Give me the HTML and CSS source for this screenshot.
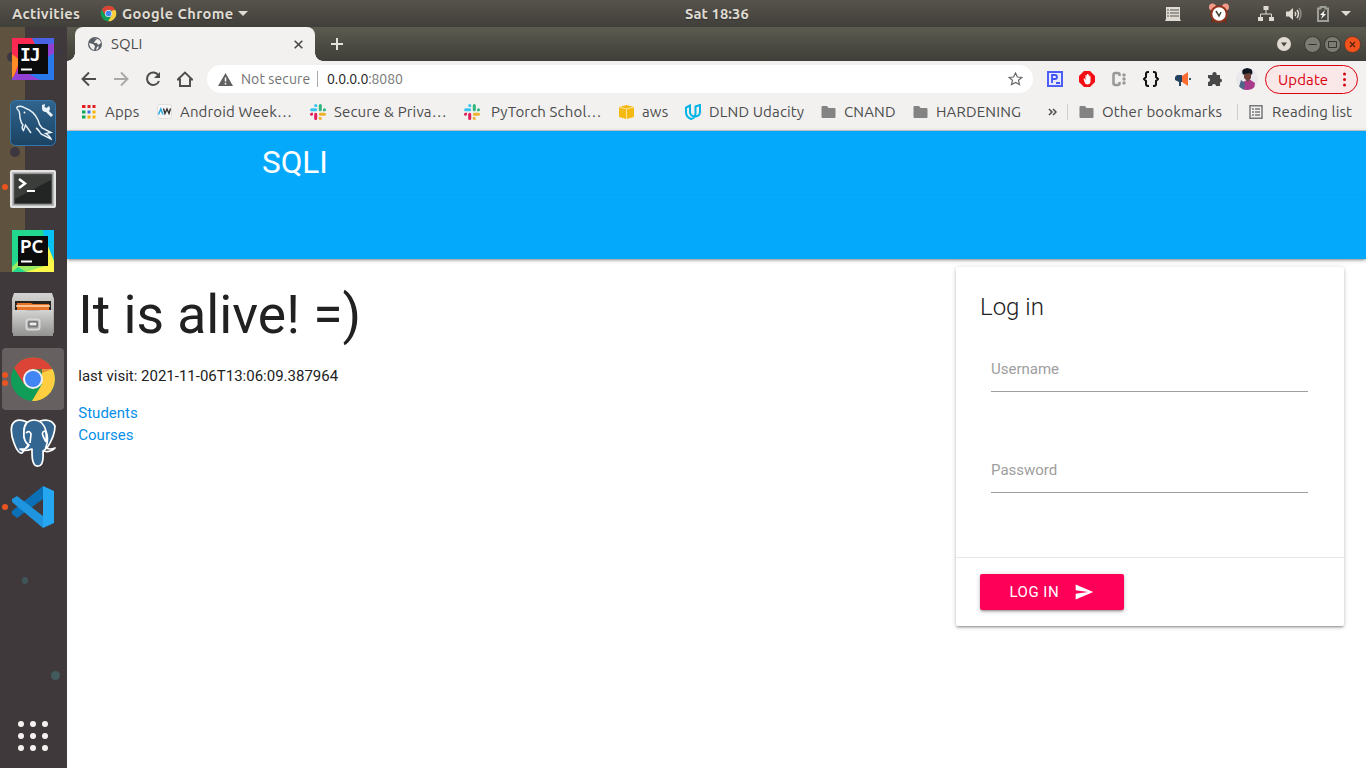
FILE: index.html
```html
<!DOCTYPE html>
<html lang="en">
<head>
<meta charset="utf-8">
<title>SQLI</title>
<link rel="stylesheet" href="styles.css">
</head>
<body>
<svg class="defs" width="0" height="0">
  <symbol id="chrome" viewBox="0 0 48 48">
    <circle cx="24" cy="24" r="22" fill="#0f9d58"/>
    <path d="M5 13A22 22 0 0 1 43.500 14H24L15 29Z" fill="#db4437"/>
    <path d="M43.500 14A22 22 0 0 1 23 46L33 29V14Z" fill="#ffcd40"/>
    <path d="M24 14h19.500l-10.500 4Z" fill="#c43b2f" opacity=".4"/>
    <circle cx="24" cy="24" r="10" fill="#f1f1f1"/><circle cx="24" cy="24" r="8" fill="#4285f4"/>
  </symbol>
  <symbol id="slack" viewBox="0 0 16 16">
    <path d="M5.700 0a1.500 1.500 0 0 1 1.500 1.500V3H5.700a1.500 1.500 0 0 1 0-3zM1.600 4.200H5.700a1.500 1.500 0 0 1 0 3H1.600a1.500 1.500 0 0 1 0-3z" fill="#36c5f0"/>
    <path d="M10.300 0a1.500 1.500 0 0 1 1.500 1.500V5.700a1.500 1.500 0 0 1-3 0V1.500A1.500 1.500 0 0 1 10.300 0zM14.500 4.200a1.500 1.500 0 0 1 0 3H13V5.700a1.500 1.500 0 0 1 1.500-1.500z" fill="#2eb67d"/>
    <path d="M10.300 8.800h4.200a1.500 1.500 0 0 1 0 3h-4.200a1.500 1.500 0 0 1 0-3zM8.800 13h1.500a1.500 1.500 0 1 1-1.500 1.500z" fill="#ecb22e"/>
    <path d="M5.700 8.800a1.500 1.500 0 0 1 1.500 1.500v4.200a1.500 1.500 0 0 1-3 0v-4.200a1.500 1.500 0 0 1 1.500-1.500zM1.500 8.800H3v1.500a1.500 1.500 0 1 1-1.500-1.500z" fill="#e01e5a"/>
  </symbol>
  <symbol id="folder" viewBox="0 0 14 12"><path d="M1 0H5.500L7 2H13Q14 2 14 3V11Q14 12 13 12H1Q0 12 0 11V1Q0 0 1 0Z" fill="#838383"/></symbol>
</svg>
<header class="topbar">
  <span class="activities">Activities</span>
  <span class="app-menu"><svg width="17" height="17"><use href="#chrome"/></svg><b>Google Chrome</b><i class="caret"></i></span>
  <span class="clock">Sat 18:36</span>
  <span class="indicators">
    <svg width="16" height="14" viewBox="0 0 16 14"><path d="M1 0H15V12L16 14H0L1 12Z" fill="#dfdbd2"/><path d="M2 3h2M5 3h9M2 6h2M5 6h9M2 9h2M5 9h9" stroke="#57554f" stroke-width="1.200"/></svg>
    <svg class="alarm" width="22" height="20" viewBox="0 0 22 20"><path d="M5 17l-1 2.500M17 17l1 2.500" stroke="#7b2815" stroke-width="2"/><circle cx="4.500" cy="4" r="3.500" fill="#f59a8b"/><circle cx="17.500" cy="4" r="3.500" fill="#f59a8b"/><circle cx="11" cy="11" r="7.700" fill="#fff" stroke="#8e321a" stroke-width="2"/><path d="M8 8l3 5 2-4" fill="none" stroke="#443" stroke-width="1.500"/></svg>
    <svg class="net" width="16" height="15" viewBox="0 0 16 15"><path d="M5.500 0h5v4h-5zM0 11h5v4H0zM11 11h5v4h-5z" fill="#dfdbd2"/><path d="M8 4v4M2.500 11V8H13.500v3" fill="none" stroke="#dfdbd2"/></svg>
    <svg class="vol" width="16" height="14" viewBox="0 0 16 14"><path d="M0 4.500h3L7 1v12L3 9.500H0z" fill="#dfdbd2"/><path d="M9 5q1.500 2 0 4M11 3q3 4 0 8" fill="none" stroke="#dfdbd2" stroke-width="1.500"/><path d="M13 1q4 6 0 12" fill="none" stroke="#8c8a84" stroke-width="1.500"/></svg>
    <svg class="bat" width="12" height="16" viewBox="0 0 12 16"><path d="M1 2.500h2.500V1h5v1.500H11V15H1z" fill="none" stroke="#9f9d97" stroke-width="2"/><path d="M8 4L3 9h2.500L4 13l5-5H6.500z" fill="#fff"/></svg>
    <i class="caret"></i>
  </span>
</header>
<div class="desktop">
<nav class="dock">
  <i class="wall w1"></i><i class="wall w2"></i><i class="wall w3"></i><i class="wall w4"></i><i class="wall w5"></i>
  <div class="app"><svg width="42" height="42" viewBox="0 0 42 42"><path fill="#2979ea" d="M0 0h42v42H0z"/><path fill="#fc2952" d="M0 0h20l10 20L0 40z"/><path fill="#4a63e4" d="M20 0H42L39 13 28 8z"/><path fill="#fc8c25" d="M0 16l8 6-6 16-2 2z"/><path fill="#9140d3" d="M0 42l6-12 22 12zM33 8l9-3v10l-6 4z"/><path d="M6 6h30v30H6z" fill="#0b0b0c"/><path d="M9 31.500h11" stroke="#fff" stroke-width="2"/><text x="8" y="22.500" class="glyph mono">IJ</text></svg></div>
  <div class="app"><svg width="46" height="46" viewBox="0 0 46 46"><defs><linearGradient id="sea" x2="0" y2="1"><stop stop-color="#30658f"/><stop offset="1" stop-color="#1b4262"/></linearGradient></defs><rect x=".5" y=".5" width="45" height="45" rx="5" fill="url(#sea)" stroke="#3578ad"/><path d="M7 7Q11 5 15 8Q24 11 28 20Q29 25 32 28L41 32.500 35.500 33.500Q40 36 41 39L31 34Q28 29 26 28M7 7Q6 8 9 11Q10 14 10 18Q11 23 13 25Q11 28 13.500 30.500L15.500 25 21 33" fill="none" stroke="#e8f2f8" stroke-width="1.400"/><circle cx="14.500" cy="12.500" r=".9" fill="#fff"/><path d="M32 5l3-1-.5 3 2 1L39 6q2 3 0 5l4 4-2 2-5-5q-4 0-4-4z" fill="#e8f2f8"/></svg></div>
  <div class="app run term"><svg width="46" height="38" viewBox="0 0 46 38"><rect x="1" y="1" width="44" height="36" rx="1" fill="#bbb" stroke="#e3e3e3" stroke-width="2"/><rect x="4" y="4" width="38" height="30" fill="#232524" stroke="#707070"/><path d="M5 5h36v5L5 29z" fill="#3b3d3b"/><path d="M9 9l6 4.500L9 18" stroke="#fff" stroke-width="2.500" fill="none"/><path d="M17 21h8" stroke="#fff" stroke-width="2"/></svg></div>
  <div class="app"><svg width="42" height="42" viewBox="0 0 42 42"><path fill="#22d88f" d="M0 0h42v42H0z"/><path fill="#08c2f4" d="M31 0h11v29L32 9z"/><path fill="#fcf84a" d="M27 6l7 5 8 20v11H14L32 16z"/><path fill="#9bea64" d="M0 37l8-8 28 6-22 7-8-5-6 5z"/><path d="M6 6h30v30H6z" fill="#0b0b0c"/><path d="M9 31.500h11" stroke="#fff" stroke-width="2"/><text x="8" y="22.500" class="glyph" textLength="23" lengthAdjust="spacingAndGlyphs">PC</text></svg></div>
  <div class="app"><svg width="44" height="46" viewBox="0 0 44 46"><defs><linearGradient id="met" x2="0" y2="1"><stop stop-color="#d4d4d2"/><stop offset="1" stop-color="#929290"/></linearGradient></defs><path d="M3 1H41L43 7V41H1V7z" fill="url(#met)"/><path d="M4 9h36v9H4z" fill="#29231d"/><path d="M6 11h14l2 1h16v6H6z" fill="#e67225"/><path d="M5 14h34" stroke="#ffe2bd" stroke-width="1.500"/><path d="M2 18H15L16 19H28L29 18H42V44H2z" fill="url(#met)"/><rect x="15.500" y="27.500" width="13" height="10" rx="2" fill="#999" stroke="#d8d8d8" stroke-width="2"/><path d="M18 30h8v4h-8z" fill="#eee" stroke="#555"/></svg></div>
  <div class="app run run2 active"><svg width="48" height="48"><use href="#chrome"/></svg></div>
  <div class="app"><svg width="48" height="50" viewBox="0 0 48 50"><g fill="#336791" stroke="#fff" stroke-width="1.700" stroke-linejoin="round"><path d="M18 4Q7-1 3 7Q1 15 5 25Q9 36 13 35L20 26Q14 23 15 14Q15 7 18 4Z"/><path d="M31 3Q42 0 46 8Q46 18 38 30L32 28z"/><path d="M15 13Q16 2 25 2Q34 2 37 13Q40 21 37 29Q37 32 34 33Q35 48 29 48Q23 49 23 34V31Q15 34 11 31Q18 32 20 27Q14 24 15 13Z"/><path d="M37 30Q41 32 46 30Q41 35 35 33" fill="none"/><path d="M17 15q4-3 5 1l-1 9M37 13q-5 0-3 5l3 6M36 12q2 5 1 12" fill="none"/></g></svg></div>
  <div class="app run"><svg width="42" height="42" viewBox="0 0 42 42"><path d="M31 0v13L5 32 0 28V25z" fill="#0b70b5"/><path d="M0 13l5-3L31 30v12L0 16z" fill="#1f95e0"/><path d="M31 0l11 5v32L31 42z" fill="#25a7f2"/></svg></div>
  <svg class="grid-btn" width="30" height="30" viewBox="0 0 30 30" fill="#f4f2f0"><circle cx="3" cy="3" r="3"/><circle cx="15" cy="3" r="3"/><circle cx="27" cy="3" r="3"/><circle cx="3" cy="15" r="3"/><circle cx="15" cy="15" r="3"/><circle cx="27" cy="15" r="3"/><circle cx="3" cy="27" r="3"/><circle cx="15" cy="27" r="3"/><circle cx="27" cy="27" r="3"/></svg>
</nav>
<section class="browser">
  <div class="tabstrip">
    <div class="tab">
      <svg width="14" height="14" viewBox="0 0 14 14"><circle cx="7" cy="7" r="7" fill="#5b5f67"/><path d="M6 1Q9 1 9 2L7 4 6 6H9L10 8 13 6Q13 4 11 2.500ZM1 6L5 7 7 9 6 13Q2 12 1 6ZM9 10l2-1-1 3-2 1z" fill="#f2f1f0"/></svg>
      <span>SQLI</span>
      <svg class="close" width="9" height="9" viewBox="0 0 9 9"><path d="M.7.7l7.600 7.600M8.300.7L.7 8.300" stroke="#4a4a4a" stroke-width="1.600"/></svg>
    </div>
    <svg class="plus" width="12" height="12" viewBox="0 0 12 12"><path d="M6 0v12M0 6h12" stroke="#e5e3dd" stroke-width="2"/></svg>
    <div class="win">
      <svg width="14" height="14" viewBox="0 0 14 14"><circle cx="7" cy="7" r="7" fill="#dfdbd2"/><path d="M4 5.500h6L7 9.500z" fill="#45443e"/></svg>
      <svg class="first" width="17" height="17" viewBox="0 0 17 17"><circle cx="8.500" cy="8.500" r="8" fill="#7d7c74" stroke="#38372f"/><path d="M4.500 8.500h8" stroke="#34332e"/></svg>
      <svg width="17" height="17" viewBox="0 0 17 17"><circle cx="8.500" cy="8.500" r="8" fill="#7d7c74" stroke="#38372f"/><path d="M4.500 5.500h8v6h-8z" fill="none" stroke="#34332e"/></svg>
      <svg width="17" height="17" viewBox="0 0 17 17"><circle cx="8.500" cy="8.500" r="8" fill="#f3521d" stroke="#4c3027" stroke-width=".6"/><path d="M6 6l5 5M11 6l-5 5" stroke="#502211" stroke-width="1.200"/></svg>
    </div>
  </div>
  <div class="toolbar">
    <svg width="16" height="16" viewBox="0 0 16 16"><path d="M15 8H2M8 1.500L1.500 8 8 14.500" fill="none" stroke="#4c4c4c" stroke-width="1.900"/></svg>
    <svg width="16" height="16" viewBox="0 0 16 16"><path d="M1 8h13M8 1.500L14.500 8 8 14.500" fill="none" stroke="#a9a8a7" stroke-width="1.900"/></svg>
    <svg width="16" height="16" viewBox="0 0 16 16"><path d="M13.500 4.500A6.200 6.200 0 1 0 14 10" fill="none" stroke="#4c4c4c" stroke-width="2"/><path d="M15 1v6H9z" fill="#4c4c4c"/></svg>
    <svg width="16" height="16" viewBox="0 0 16 16"><path d="M.8 8.500L8 1.500 15.200 8.500H13V15H3V8.500Z" fill="none" stroke="#4c4c4c" stroke-width="1.900"/></svg>
    <div class="omnibox">
      <svg width="15" height="13" viewBox="0 0 15 13"><path d="M7.500 0L15 13H0z" fill="#616161"/><path d="M7.500 4.500V8.500M7.500 9.800v1.600" stroke="#fff" stroke-width="1.500"/></svg>
      <span class="insecure">Not secure</span><i></i><span class="url">0.0.0.0<em>:8080</em></span>
      <svg class="star" width="15" height="14" viewBox="0 0 15 14"><path d="M7.500 1l1.900 4 4.400.4-3.300 2.900 1 4.300-4-2.200-4 2.200 1-4.300L1.200 5.400 5.600 5z" fill="none" stroke="#666" stroke-width="1.200"/></svg>
    </div>
    <div class="exts">
      <svg width="16" height="16" viewBox="0 0 16 16"><path d="M1 1h14v14H1z" fill="#e8e9fc" stroke="#4d5ef6" stroke-width="2"/><path d="M5 12V4h3q2 0 2 2T8 8H5M9 12h4" fill="none" stroke="#4053f5" stroke-width="1.800"/></svg>
      <svg width="16" height="16" viewBox="0 0 16 16"><path d="M5 0h6l5 5v6l-5 5H5l-5-5V5z" fill="#f40d12"/><path d="M4.500 7.500h1l1 1.500V4h1v3l.5-4h1l.2 4V3.500h1V7l.3-2h1v6q-.5 2.500-3 2.500T5.500 11Z" fill="#fff"/></svg>
      <svg width="16" height="16" viewBox="0 0 16 16"><path d="M8.500 5V3.500Q8.500 2 6.500 2H4.500Q2.500 2 2.500 4V12Q2.500 14 4.500 14H6.500Q8.500 14 8.500 12.500V11" fill="none" stroke="#999" stroke-width="2.600"/><g fill="#999"><circle cx="13" cy="4" r="1.700"/><circle cx="13" cy="8" r="1.700"/><circle cx="13" cy="12" r="1.700"/></g></svg>
      <svg width="16" height="16" viewBox="0 0 16 16"><path d="M6 1H5Q3 1 3 3V6L1 8l2 2v3q0 2 2 2h1M10 1h1q2 0 2 2v3l2 2-2 2v3q0 2-2 2h-1" fill="none" stroke="#111" stroke-width="2"/></svg>
      <svg width="16" height="16" viewBox="0 0 16 16"><path d="M2 4h5v7H6v4H4v-4L0 9V6z" fill="#24415d"/><path d="M7 5l6-4v14l-6-4z" fill="#ff6c32"/><path d="M14 7h2v2h-2z" fill="#35526b"/></svg>
      <svg width="16" height="16" viewBox="0 0 16 16"><path d="M1 4h4.500A2.200 2.200 0 1 1 9.500 4H13v3.500a2 2 0 1 1 0 4V15H9a2 2 0 1 0-4 0H1V11a2 2 0 1 0 0-4z" fill="#484848"/></svg>
      <svg class="avatar" width="22" height="22" viewBox="0 0 22 22"><defs><clipPath id="round"><circle cx="11" cy="11" r="11"/></clipPath></defs><g clip-path="url(#round)"><path d="M0 0h22v22H0z" fill="#e9e9ec"/><path d="M6 22l1-8 6-3 6 4-1 7z" fill="#a83c8a"/><path d="M8 5q3-3 7 0v5l-3 4-4-4z" fill="#714338"/><path d="M7 7Q4 1 11 0q7 0 5 7l-2-2-6 1z" fill="#101722"/><path d="M3 19l2-7 4 3-1 7z" fill="#4e6687"/></g></svg>
    </div>
    <button class="update">Update<svg width="3" height="15" viewBox="0 0 3 15" fill="#d9000d"><circle cx="1.500" cy="2" r="1.500"/><circle cx="1.500" cy="7.500" r="1.500"/><circle cx="1.500" cy="13" r="1.500"/></svg></button>
  </div>
  <div class="bookmarks">
    <span><svg width="15" height="14" viewBox="0 0 15 14"><path d="M0 0h3.500v3H0zM5.500 0h3v3h-3zM10.500 0h3v3h-3z" fill="#e61f1f"/><path d="M0 5.500h3.500v3H0zM0 10.500h3.500v3H0z" fill="#0fa958"/><path d="M5.500 5.500h3v3h-3z" fill="#3b73e8"/><path d="M10.500 5.500h3v3h-3zM5.500 10.500h3v3h-3zM10.500 10.500h3v3h-3z" fill="#f5b400"/></svg><a>Apps</a></span>
    <span><svg width="15" height="15" viewBox="0 0 15 15"><rect x=".5" y=".5" width="14" height="14" rx="1.500" fill="#f7f7f7" stroke="#e0e0e0"/><path d="M1.500 10.500L3.800 5 6 10.500" fill="none" stroke="#27a9df" stroke-width="1.500"/><path d="M6.500 4.500l1.500 5 2-4.500 2 4.500 1.500-5" fill="none" stroke="#333" stroke-width="1.400"/></svg><a>Android Week…</a></span>
    <span><svg width="16" height="16"><use href="#slack"/></svg><a>Secure &amp; Priva…</a></span>
    <span class="g11"><svg width="16" height="16"><use href="#slack"/></svg><a>PyTorch Schol…</a></span>
    <span><svg width="15" height="14" viewBox="0 0 15 14"><path d="M0 2l7.500-2L15 2v10l-7.500 2L0 12z" fill="#f5b914"/><path d="M0 2l7.500 2L15 2M7.500 4v10" fill="none" stroke="#fbe39d"/></svg><a>aws</a></span>
    <span><svg width="16" height="16" viewBox="0 0 16 16"><path d="M5 1.500L1 3.500V8Q1 13 6 15Q10.500 14 10.500 9V2.500L15 1V8Q15 12 10 12.500Q5 12 5 8Z" fill="none" stroke="#02b3e4" stroke-width="2"/></svg><a>DLND Udacity</a></span>
    <span><svg width="15" height="12"><use href="#folder"/></svg><a>CNAND</a></span>
    <span><svg width="15" height="12"><use href="#folder"/></svg><a>HARDENING</a></span>
    <svg width="9" height="8" viewBox="0 0 9 8"><path d="M1 1l3 3-3 3M5 1l3 3-3 3" fill="none" stroke="#4c4c4c" stroke-width="1.500"/></svg>
    <i class="sep"></i>
    <span><svg width="15" height="12"><use href="#folder"/></svg><a>Other bookmarks</a></span>
    <i class="sep"></i>
    <span><svg width="15" height="14" viewBox="0 0 15 14"><path d="M1 .8h12v12.400H1z" fill="none" stroke="#777" stroke-width="1.500"/><path d="M3 4h2M6 4h5M3 7h2M6 7h5M3 10h2M6 10h5" stroke="#777" stroke-width="1.400"/></svg><a>Reading list</a></span>
  </div>
  <main class="page">
    <nav class="nav"><div class="brand">SQLI</div></nav>
    <div class="content">
      <div class="intro">
        <h2>It is alive! =)</h2>
        <p>last visit: 2021-11-06T13:06:09.387964</p>
        <a>Students</a><a>Courses</a>
      </div>
      <form class="card">
        <div class="card-content">
          <span class="card-title">Log in</span>
          <label class="field">Username</label>
          <label class="field">Password</label>
        </div>
        <div class="card-action"><button type="button" class="btn">LOG IN<svg width="20" height="20" viewBox="0 0 24 24"><path d="M2 21l21-9L2 3v7l15 2-15 2z" fill="#fff"/></svg></button></div>
      </form>
    </div>
  </main>
</section>
</div>
</body>
</html>
```
FILE: styles.css
```css
* { box-sizing: border-box; }
body { margin: 0; width: 1366px; height: 768px; overflow: hidden; display: flex; flex-direction: column; font-family: Ubuntu, "Noto Sans", sans-serif; font-size: 15px; color: #4c4c4c; }
svg { display: block; flex: none; }
.defs { position: absolute; }
.caret { border: 5px solid transparent; border-top-color: #dfdbd2; border-bottom: 0; }
.glyph { fill: #fff; font: 700 18px Ubuntu, "Noto Sans", sans-serif; }
.mono { font: 700 18px "DejaVu Sans Mono", monospace; letter-spacing: -1px; }

.topbar { height: 27px; flex: none; display: grid; grid-template-columns: 88px 585px 1fr auto; align-items: center; padding: 0 15px 0 12px; background: linear-gradient(#57534c, #413f3a); color: #dfdbd2; font-weight: 600; font-size: 14.67px; letter-spacing: .3px; text-shadow: 0 1px 1px #2228; }
.activities, .clock, .app-menu b { padding-bottom: 1px; }
.clock { letter-spacing: .1px; }
.app-menu { display: flex; align-items: center; gap: 5px; }
.app-menu b { font-weight: 600; letter-spacing: .38px; }
.indicators { display: flex; align-items: center; }
.alarm { margin-left: 27px; margin-top: -2px; }
.net { margin-left: 28px; }
.vol { margin-left: 12px; }
.bat { margin-left: 15px; }
.indicators .caret { margin-left: 12px; }

.desktop { flex: 1; display: flex; min-height: 0; }
.dock { position: relative; width: 67px; flex: none; background: linear-gradient(90deg, #5f523e 25px, #40393b 25px) 0 0 / 100% 245px no-repeat #40393b; padding-top: 1px; display: flex; flex-direction: column; }
.app { position: relative; width: 62px; height: 62px; margin: 0 0 2px 2px; display: grid; place-items: center; border-radius: 4px; }
.term { padding-top: 3px; }
.active { background: #676061; }
.run::before { content: ""; position: absolute; left: 0; top: 28px; width: 6px; height: 6px; border-radius: 50%; background: #e95420; }
.run2::before { top: 24px; box-shadow: 0 8px #e95420; }
.grid-btn { margin: auto 0 17px 18px; }
.wall { position: absolute; border-radius: 50%; background: #3c3740; }
.w1 { left: 7px; top: 25px; width: 10px; height: 10px; }
.w2 { left: 10px; top: 120px; width: 10px; height: 10px; }
.w3 { left: 56px; top: 22px; width: 7px; height: 7px; }
.w4 { left: 22px; top: 550px; width: 6px; height: 7px; background: #405558; }
.w5 { left: 51px; top: 644px; width: 9px; height: 9px; background: #425b5e; }

.browser { flex: 1; min-width: 0; display: flex; flex-direction: column; background: #f2f1f0; }
.tabstrip { height: 34px; display: flex; align-items: center; background: linear-gradient(#5b5b50, #3f3e38); padding: 0 5px 0 8px; }
.tab { position: relative; width: 240px; height: 34px; border-radius: 8px 8px 0 0; background: #f2f1f0; display: flex; align-items: center; padding: 0 12px 0 13px; font-size: 15px; }
.tab span { margin-left: 9px; padding-bottom: 2px; letter-spacing: .1px; }
.tab::before, .tab::after { content: ""; position: absolute; bottom: 0; width: 8px; height: 8px; }
.tab::before { left: -8px; background: radial-gradient(circle at 0 0, transparent 7.5px, #f2f1f0 8px); }
.tab::after { right: -8px; background: radial-gradient(circle at 100% 0, transparent 7.5px, #f2f1f0 8px); }
.close { margin-left: auto; }
.plus { margin-left: 16px; }
.win { margin-left: auto; display: flex; align-items: center; gap: 3px; }
.win .first { margin-left: 10px; }

.toolbar { height: 36px; display: flex; align-items: center; gap: 16px; padding: 0 8px 0 14px; }
.omnibox { width: 826px; height: 28px; margin-left: -2px; background: #fff; border-radius: 14px; display: flex; align-items: center; padding: 0 10px 0 11px; font-size: 14px; }
.insecure { margin-left: 8px; width: 76px; color: #727272; white-space: nowrap; letter-spacing: .1px; }
.omnibox i { width: 1px; height: 16px; background: #aaa; margin-right: 9px; }
.url { color: #222; letter-spacing: -.1px; }
.url em { font-style: normal; color: #777; }
.star { margin-left: auto; }
.exts { display: flex; gap: 16px; margin-left: -2px; align-items: center; }
.avatar { margin: 0 -3px; }
.update { width: 93px; height: 29px; margin-left: -6px; border: 1px solid #d9000d; border-radius: 15px; background: #fae8e9; color: #d9000d; font: 15px Ubuntu, "Noto Sans", sans-serif; letter-spacing: .1px; padding: 0 11px 0 12px; display: flex; align-items: center; justify-content: space-between; }

.bookmarks { height: 34px; display: grid; grid-template-columns: 75px 153px 154px 155px 66px 136px 92px 135px 19px 12px 158px 12px 1fr; align-items: center; padding: 0 0 4px 15px; border-bottom: 1px solid #c9c8c7; white-space: nowrap; letter-spacing: .15px; }
.bookmarks span { display: flex; align-items: center; gap: 8px; }
.bookmarks .g11 { gap: 11px; }
.sep { width: 1px; height: 16px; background: #cfcecd; }

.page { flex: 1; background: #fff; font: 15px/22.5px Roboto, sans-serif; color: #212121; }
.nav { height: 128px; background: linear-gradient(#05a9fc 63px, #04a5f7 63px, #04a5f7 64px, #05a9fc 64px); box-shadow: 0 2px 2px 0 #00000024, 0 3px 1px -2px #0000001f, 0 1px 5px 0 #00000033; }
.brand { padding-left: 195px; font-size: 31.5px; line-height: 63px; color: #fff; }
.content { display: flex; justify-content: space-between; padding: 8px 22px 0 11.3px; }
.intro a { display: block; line-height: 22px; color: #078fe9; }
h2 { font-size: 53.4px; font-weight: 400; line-height: 58.7px; margin: 19px 0 20px; }
p { margin: 0 0 15px; }
.card { width: 388px; height: 359px; background: #fff; border-radius: 2px; box-shadow: 0 2px 2px 0 #00000024, 0 3px 1px -2px #0000001f, 0 1px 5px 0 #00000033; }
.card-content { height: 290px; padding: 24px; }
.card-title { display: block; font-size: 24px; line-height: 32px; font-weight: 300; }
.field { display: block; width: 317px; height: 45px; margin: 24px 0 0 11px; padding-top: 11px; border-bottom: 1px solid #9e9e9e; color: #9e9e9e; }
.field + .field { margin-top: 56px; }
.card-action { border-top: 1px solid #e8e8e8; padding: 16px 24px; }
.btn { width: 144px; height: 36px; border: 0; border-radius: 2px; background: #ff0059; color: #fff; font: 15px Roboto, sans-serif; letter-spacing: .5px; padding: 0 30px 0 29.5px; display: flex; align-items: center; justify-content: space-between; box-shadow: 0 2px 2px 0 #00000024, 0 3px 1px -2px #0000001f, 0 1px 5px 0 #00000033; }
```
